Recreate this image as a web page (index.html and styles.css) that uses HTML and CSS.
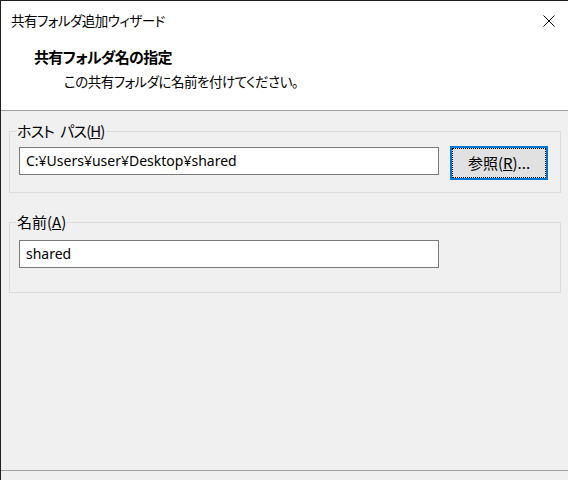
FILE: index.html
```html
<!DOCTYPE html>
<html lang="ja">
<head>
<meta charset="utf-8">
<title>共有フォルダ追加ウィザード</title>
<link rel="stylesheet" href="styles.css">
</head>
<body>
<div class="window">
  <div class="header">
    <div class="titlebar">
      <span class="title">共有フォルダ追加ウィザード</span>
      <svg class="close" width="12" height="12" viewBox="0 0 12 12"><path d="M0.5 0.5 L11.5 11.5 M11.5 0.5 L0.5 11.5" stroke="#000" stroke-width="1" fill="none"/></svg>
    </div>
    <div class="heading">共有フォルダ名の指定</div>
    <div class="subtitle">この共有フォルダに名前を付けてください。</div>
  </div>
  <div class="main">
    <fieldset class="group group-path">
      <legend class="legend legend-path">ホスト パス(<u>H</u>)</legend>
      <div class="row">
        <div class="textbox">C:¥Users¥user¥Desktop¥shared</div>
        <div class="button">参照(<u>R</u>)...</div>
      </div>
    </fieldset>
    <fieldset class="group group-name">
      <legend class="legend">名前(<u>A</u>)</legend>
      <div class="textbox">shared</div>
    </fieldset>
  </div>
  <div class="footer"></div>
</div>
</body>
</html>
```
FILE: styles.css
```css
html, body {
  margin: 0;
  padding: 0;
  background: #f0f0f0;
}

.window {
  width: 568px;
  height: 480px;
  box-sizing: border-box;
  border-top: 1px solid #1f1f1f;
  border-left: 1px solid #1f1f1f;
  background: #f0f0f0;
  display: flex;
  flex-direction: column;
  font-family: "Noto Sans CJK JP", "Noto Sans", sans-serif;
  font-feature-settings: "palt";
  font-size: 15px;
  color: #000;
}

.header {
  background: #fff;
  height: 110px;
  box-sizing: border-box;
  border-bottom: 1px solid #a0a0a0;
  flex: none;
}

.titlebar {
  display: flex;
  align-items: center;
  justify-content: space-between;
  height: 20px;
  padding: 9px 13px 0 10px;
  line-height: 20px;
}

.title {
  font-size: 13.5px;
  letter-spacing: -0.5px;
}

.close {
  display: block;
  margin-top: 1px;
}

.heading {
  font-weight: bold;
  line-height: 20px;
  margin-top: 17px;
  padding-left: 33px;
  letter-spacing: -0.7px;
}

.subtitle {
  font-size: 13.5px;
  letter-spacing: -0.5px;
  line-height: 20px;
  margin-top: 4px;
  padding-left: 63px;
}

.main {
  flex: 1;
  padding: 10px 7px 0 8px;
}

.group {
  margin: 0;
  border: 1px solid #dcdcdc;
  padding: 0 9px;
  min-width: 0;
}

.legend {
  padding: 0 1px;
  margin-left: -3px;
  line-height: 20px;
}

.legend-path {
  letter-spacing: -0.9px;
  word-spacing: 4px;
}

.group-path {
  padding-top: 6px;
  padding-bottom: 12px;
}

.group-name {
  margin-top: 19px;
  padding-top: 8px;
  padding-bottom: 24px;
}

.row {
  display: flex;
  align-items: flex-start;
  gap: 11px;
}

.textbox {
  width: 420px;
  height: 28px;
  box-sizing: border-box;
  border: 1px solid #7a7a7a;
  background: #fff;
  padding: 0 6px;
  font-family: "Noto Sans", "Noto Sans CJK JP", sans-serif;
  font-feature-settings: normal;
  font-size: 14px;
  line-height: 26px;
  white-space: nowrap;
}

.button {
  width: 98px;
  height: 34px;
  margin-top: -1px;
  box-sizing: border-box;
  border: 2px solid #0078d7;
  background: #e1e1e1;
  outline: 1px dotted #000;
  outline-offset: -3px;
  display: flex;
  align-items: center;
  justify-content: center;
  line-height: 20px;
}

.footer {
  flex: none;
  height: 9px;
  border-top: 1px solid #a0a0a0;
}
```
